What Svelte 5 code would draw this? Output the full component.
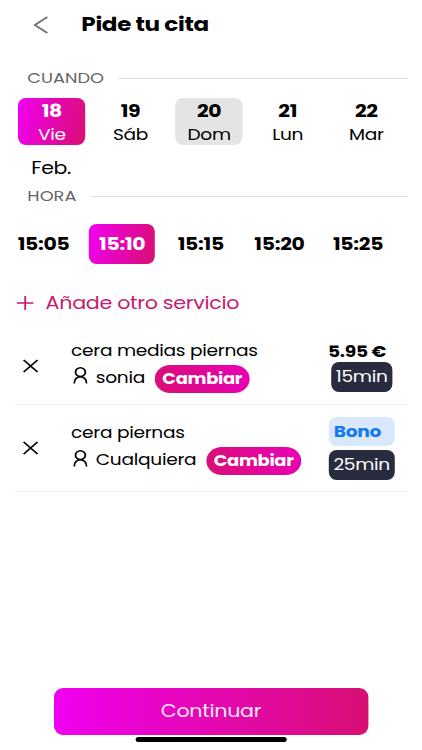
<script lang="ts">
	interface Service {
		name: string;
		staff: string;
		price: string;
		voucher: boolean;
		minutes: number;
	}

	const days = [
		{ num: 18, name: 'Vie' },
		{ num: 19, name: 'Sáb' },
		{ num: 20, name: 'Dom', closed: true },
		{ num: 21, name: 'Lun' },
		{ num: 22, name: 'Mar' }
	];
	const hours = ['15:05', '15:10', '15:15', '15:20', '15:25'];

	let selectedDay = $state(18);
	let selectedHour = $state('15:10');
	let services = $state<Service[]>([
		{ name: 'cera medias piernas', staff: 'sonia', price: '5.95 €', voucher: false, minutes: 15 },
		{ name: 'cera piernas', staff: 'Cualquiera', price: 'Bono', voucher: true, minutes: 25 }
	]);

	function removeService(index: number) {
		services = services.filter((_, i) => i !== index);
	}
</script>

<div class="screen">
	<header>
		<button class="back" aria-label="Volver">
			<svg width="12" height="18" viewBox="0 0 12 18" preserveAspectRatio="none">
				<path d="M11.5 1 L1 9 L11.5 17" />
			</svg>
		</button>
		<h1>Pide tu cita</h1>
	</header>

	<div class="section-title when"><span>CUANDO</span><hr /></div>
	<div class="days">
		{#each days as day}
			<button
				class="day"
				class:selected={day.num === selectedDay}
				class:closed={day.closed}
				onclick={() => (selectedDay = day.num)}
			>
				<b>{day.num}</b>
				<span>{day.name}</span>
			</button>
		{/each}
	</div>
	<div class="month">Feb.</div>

	<div class="section-title"><span>HORA</span><hr /></div>
	<div class="hours">
		{#each hours as hour}
			<button class="hour" class:selected={hour === selectedHour} onclick={() => (selectedHour = hour)}>
				{hour}
			</button>
		{/each}
	</div>

	<button class="add">
		<svg width="14" height="16" viewBox="0 0 14 16">
			<path d="M7 1 V15 M0 8 H14" />
		</svg>
		<span>Añade otro servicio</span>
	</button>

	<div class="services">
		{#each services as service, index}
			<div class="service" class:with-voucher={service.voucher}>
				<button class="remove" aria-label="Quitar" onclick={() => removeService(index)}>
					<svg width="13" height="14" viewBox="0 0 13 14">
						<path d="M.7 1 L12.3 13 M12.3 1 L.7 13" />
					</svg>
				</button>
				<div class="info">
					<div class="name">{service.name}</div>
					<div class="staff">
						<svg width="12" height="17" viewBox="0 0 12 17">
							<ellipse cx="6" cy="5.2" rx="4.1" ry="4.4" />
							<path d="M.8 16.4 C.8 12.5 3.2 9.7 6 9.7 S11.2 12.5 11.2 16.4" />
						</svg>
						<span>{service.staff}</span>
						<button class="change">Cambiar</button>
					</div>
				</div>
				<div class="cost">
					<div class="price" class:voucher={service.voucher}>{service.price}</div>
					<div class="minutes">{service.minutes}min</div>
				</div>
			</div>
		{/each}
	</div>

	<footer>
		<button class="continue">Continuar</button>
		<div class="home-bar"></div>
	</footer>
</div>

<style>
	:global(body) {
		background: #fff;
		overflow: hidden;
	}

	.screen {
		display: flex;
		flex-direction: column;
		width: 351.67px;
		height: 750px;
		transform: scaleX(1.2);
		transform-origin: 0 0;
		font-family: Poppins, Inter, 'Open Sans', sans-serif;
		font-size: 15.5px;
		letter-spacing: -0.24px;
		color: #000;
		background: #fff;
		white-space: nowrap;
	}

	button {
		display: flex;
		align-items: center;
		justify-content: center;
		margin: 0;
		padding: 0;
		border: 0;
		background: none;
		font: inherit;
		color: inherit;
		letter-spacing: inherit;
		cursor: pointer;
	}

	svg {
		display: block;
		flex: none;
		fill: none;
		stroke: currentColor;
		stroke-width: 1.5;
	}

	header {
		display: flex;
		align-items: center;
		height: 49px;
		padding-left: 28.3px;
		gap: 27.5px;
	}

	.back {
		color: #777;
	}

	.back svg {
		stroke-width: 1.8;
	}

	h1 {
		margin: 0;
		font-size: 19.2px;
		font-weight: 700;
		letter-spacing: -0.27px;
	}

	.section-title {
		display: flex;
		align-items: center;
		height: 20px;
		margin: 0 12px 0 22.8px;
		gap: 12px;
		font-size: 14.8px;
		letter-spacing: 0;
		color: #666;
	}

	.section-title.when {
		margin-top: 19px;
	}

	.section-title hr {
		flex: 1;
		height: 1px;
		margin: 0;
		border: 0;
		background: #dcdcdc;
	}

	.days {
		display: grid;
		grid-template-columns: repeat(5, 65.5px);
		justify-items: center;
		padding: 10px 0 0 10.5px;
	}

	.day {
		flex-direction: column;
		width: 56.3px;
		height: 47px;
		border-radius: 6.5px / 8px;
		line-height: 23px;
	}

	.day b {
		margin-top: 2px;
		font-size: 17px;
	}

	.day.closed {
		background: #e4e4e4;
	}

	.day.selected,
	.hour.selected {
		color: #fff;
		background: linear-gradient(100deg, #f000f0, #d90f74);
	}

	.month {
		height: 41px;
		padding-left: 26px;
		font-size: 17px;
		line-height: 47px;
	}

	.hours {
		display: grid;
		grid-template-columns: repeat(5, 65.5px);
		justify-items: center;
		padding: 17.5px 0 0 3.6px;
	}

	.hour {
		width: 55px;
		height: 40px;
		border-radius: 6.5px / 8px;
		font-size: 17px;
		font-weight: 700;
	}

	.add {
		justify-content: flex-start;
		height: 30px;
		margin-top: 24.5px;
		padding-left: 14px;
		gap: 10px;
		font-size: 17.2px;
		color: #c9196f;
	}

	.services {
		margin: 8.5px 12px 0 11.7px;
	}

	.service {
		display: flex;
		align-items: flex-start;
		height: 77px;
		border-bottom: 1.5px solid #f0f0f0;
	}

	.service.with-voucher {
		height: 86.5px;
	}

	.remove {
		margin: 32px 27.5px 0 7px;
	}

	.info {
		flex: 1;
		padding-top: 12px;
	}

	.with-voucher .remove {
		margin-top: 36.5px;
	}

	.with-voucher .info {
		padding-top: 16.5px;
	}

	.name {
		line-height: 24px;
	}

	.staff {
		display: flex;
		align-items: center;
		height: 28px;
		margin-top: 2px;
		padding-left: 2.3px;
	}

	.staff svg {
		margin: -6px 6.3px 0 0;
	}

	.staff span {
		margin-top: -2.5px;
	}

	.change {
		width: 79.5px;
		height: 28px;
		margin-left: 8px;
		border-radius: 13px / 14px;
		font-size: 14.9px;
		font-weight: 700;
		color: #fff;
		background: linear-gradient(70deg, #d90f74, #e900b8);
	}

	.cost {
		width: 65.5px;
		padding-top: 14px;
	}

	.price {
		margin-left: -0.8px;
		font-weight: 700;
		line-height: 21px;
	}

	.minutes {
		width: 51px;
		height: 29.5px;
		margin: 0.5px 0 0 1.8px;
		border-radius: 6.5px / 8px;
		line-height: 30px;
		text-align: center;
		color: #fff;
		background: #292c3e;
	}

	.with-voucher .cost {
		padding-top: 12px;
	}

	.price.voucher {
		width: 54.5px;
		height: 29.5px;
		margin-left: 0;
		padding-left: 4px;
		box-sizing: border-box;
		border-radius: 6.5px / 8px;
		line-height: 29.5px;
		color: #1478f0;
		background: #dae8fb;
	}

	.with-voucher .minutes {
		width: 54.5px;
		margin: 4px 0 0;
	}

	footer {
		display: flex;
		flex-direction: column;
		align-items: center;
		margin-top: auto;
		padding-bottom: 8px;
	}

	.continue {
		width: 262px;
		height: 47.5px;
		border-radius: 7.5px / 9px;
		font-size: 17.2px;
		color: #ffe6fb;
		background: linear-gradient(90deg, #f000f0, #d90f74);
	}

	.home-bar {
		width: 125.5px;
		height: 5px;
		margin-top: 2px;
		border-radius: 2px / 2.5px;
		background: #000;
	}
</style>
